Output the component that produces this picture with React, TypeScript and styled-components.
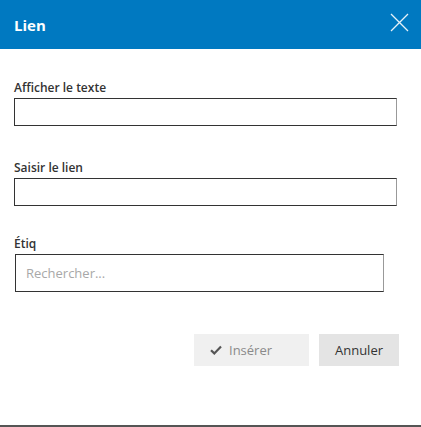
import styled, { createGlobalStyle } from 'styled-components';

const GlobalStyle = createGlobalStyle`
  html, body {
    margin: 0;
    padding: 0;
    background: #fff;
  }
  * {
    box-sizing: border-box;
  }
`;

const Dialog = styled.div`
  width: 421px;
  height: 427px;
  display: flex;
  flex-direction: column;
  background: #fff;
  border-bottom: 2px solid #555;
  font-family: 'Open Sans', 'Liberation Sans', sans-serif;
`;

const Header = styled.header`
  height: 49px;
  flex: none;
  display: flex;
  align-items: center;
  justify-content: space-between;
  padding: 0 12px 0 14px;
  background: #0079c1;
`;

const Title = styled.h1`
  margin: 0;
  font-size: 15px;
  font-weight: 700;
  color: #fff;
`;

const CloseButton = styled.button`
  display: flex;
  align-items: center;
  justify-content: center;
  width: 20px;
  height: 20px;
  padding: 0;
  margin-top: -4px;
  border: none;
  background: transparent;
  cursor: pointer;
`;

const Body = styled.div`
  display: flex;
  flex-direction: column;
  padding: 31px 24px 0 14px;
`;

const Field = styled.div<{ $gap?: number }>`
  display: flex;
  flex-direction: column;
  margin-top: ${p => p.$gap ?? 0}px;
`;

const Label = styled.label`
  font-size: 12px;
  line-height: 16px;
  font-weight: 600;
  color: #333;
  margin-bottom: 2px;
`;

const TextInput = styled.input<{ $tall?: boolean }>`
  height: ${p => (p.$tall ? 38 : 28)}px;
  width: ${p => (p.$tall ? 369 : 383)}px;
  margin-left: ${p => (p.$tall ? 1 : 0)}px;
  border: 1px solid #333;
  border-right-color: #999;
  padding: 0 10px;
  font-family: inherit;
  font-size: 13px;
  color: #333;
  outline: none;
  &::placeholder {
    color: #a8a8a8;
  }
`;

const Actions = styled.div`
  display: flex;
  justify-content: flex-end;
  gap: 10px;
  margin-top: 42px;
  padding-right: 22px;
`;

const Button = styled.button<{ $primary?: boolean }>`
  height: 32px;
  width: ${p => (p.$primary ? 115 : 80)}px;
  display: flex;
  align-items: center;
  justify-content: ${p => (p.$primary ? 'flex-start' : 'center')};
  gap: 7px;
  padding: 0 0 0 ${p => (p.$primary ? 16 : 0)}px;
  border: none;
  font-family: inherit;
  font-size: 13px;
  background: ${p => (p.$primary ? '#f0f0f0' : '#e4e4e4')};
  color: ${p => (p.$primary ? '#8a8a8a' : '#333')};
`;

export default function App() {
  return (
    <>
      <GlobalStyle />
      <Dialog>
        <Header>
          <Title>Lien</Title>
          <CloseButton aria-label="Fermer">
            <svg width="19" height="19" viewBox="0 0 19 19">
              <path d="M1 1L18 18M18 1L1 18" stroke="#e6f1f8" strokeWidth="1.3" fill="none" />
            </svg>
          </CloseButton>
        </Header>
        <Body>
          <Field>
            <Label>Afficher le texte</Label>
            <TextInput />
          </Field>
          <Field $gap={34}>
            <Label>Saisir le lien</Label>
            <TextInput />
          </Field>
          <Field $gap={30}>
            <Label>Étiq</Label>
            <TextInput $tall placeholder="Rechercher..." />
          </Field>
        </Body>
        <Actions>
          <Button $primary disabled>
            <svg width="12" height="10" viewBox="0 0 12 10">
              <path d="M1 5.2L4.3 8.4L11 1.6" stroke="#555" strokeWidth="2.2" fill="none" />
            </svg>
            Insérer
          </Button>
          <Button>Annuler</Button>
        </Actions>
      </Dialog>
    </>
  );
}
